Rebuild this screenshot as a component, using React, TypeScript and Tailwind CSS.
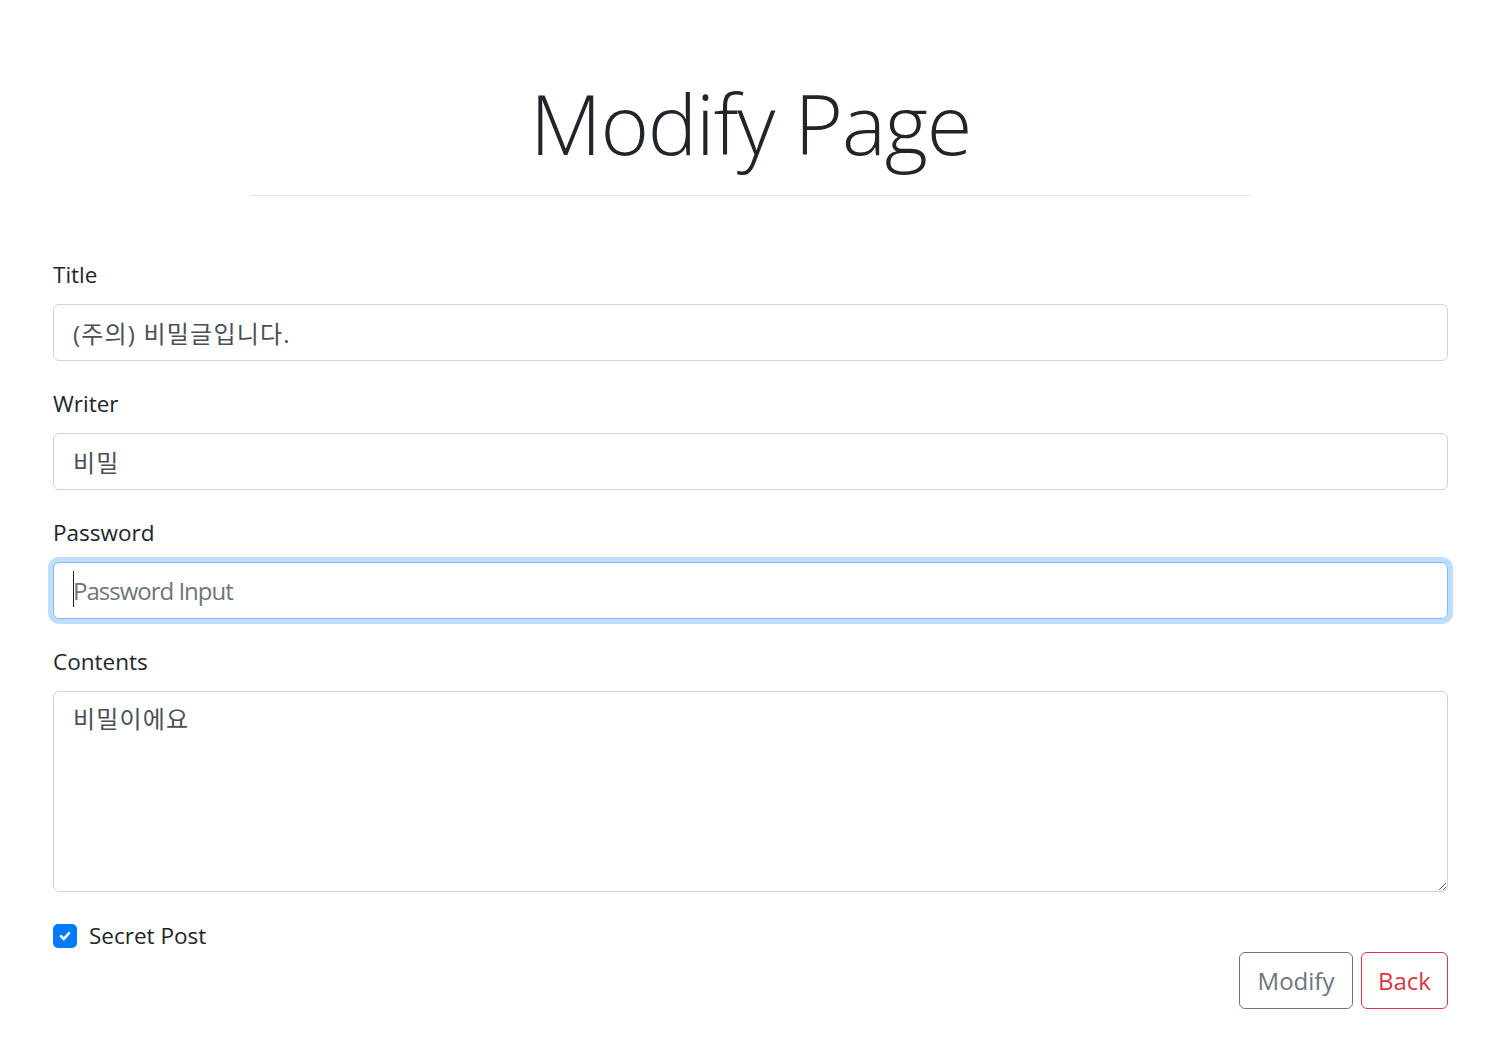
import React from "react";

const font = { fontFamily: '"Open Sans", "Noto Sans CJK KR", sans-serif' };

const Field = ({ label, children }: { label: string; children: React.ReactNode }) => (
  <div className="mb-[28px]">
    <label className="block h-[30px] text-[22.5px] leading-[30px] text-[#212529] mb-[14px]">{label}</label>
    {children}
  </div>
);

const inputCls =
  "block w-full h-[57px] border border-[#ced4da] rounded-[6px] px-[19px] text-[24px] tracking-[1.2px] text-[#495057] bg-white outline-none";

export default function App() {
  return (
    <div className="min-h-screen bg-white" style={font}>
      <div className="pt-[69px] flex flex-col items-center">
        <h1 className="text-[83px] font-light leading-[108px] tracking-[-1.2px] text-[#212529]">Modify Page</h1>
        <div className="w-[1001px] h-px bg-[#e5e5e5] mt-[18px]" />
      </div>

      <form className="flex flex-col px-[53px] mt-[64px]" onSubmit={(e) => e.preventDefault()}>
        <Field label="Title">
          <input className={inputCls} defaultValue="(주의) 비밀글입니다." style={font} />
        </Field>
        <Field label="Writer">
          <input className={inputCls} defaultValue="비밀" style={font} />
        </Field>
        <Field label="Password">
          <div className="relative">
            <input
              type="password"
              className="block w-full h-[57px] border border-[#80bdff] rounded-[6px] px-[19px] text-[24px] tracking-[-1px] text-[#495057] bg-white outline-none shadow-[0_0_0_5px_rgba(0,123,255,0.25)] placeholder:text-[#6c757d]"
              placeholder="Password Input"
              style={font}
            />
            <span className="absolute left-[20px] top-[9px] w-px h-[36px] bg-[#212529]" />
          </div>
        </Field>
        <Field label="Contents">
          <textarea
            className="block w-full h-[201px] border border-[#ced4da] rounded-[6px] px-[19px] py-[9px] text-[24px] leading-[36px] tracking-[1.2px] text-[#495057] bg-white outline-none"
            defaultValue="비밀이에요"
            style={font}
          />
        </Field>

        <div className="flex items-center h-[30px] mt-[1px]">
          <span className="w-[24px] h-[24px] rounded-[5px] bg-[#007bff] flex items-center justify-center">
            <svg width="14" height="14" viewBox="0 0 14 14">
              <path d="M3 7.2 L5.8 10 L11 4.2" fill="none" stroke="white" strokeWidth="2.6" strokeLinecap="round" strokeLinejoin="round" />
            </svg>
          </span>
          <span className="ml-[12px] text-[22.5px] text-[#212529]">Secret Post</span>
        </div>

        <div className="flex justify-end gap-[8px] mt-[1px]">
          <button type="button" className="w-[114px] h-[57px] border border-[#6c757d] rounded-[6px] text-[24px] text-[#6c757d] bg-white">
            Modify
          </button>
          <button type="button" className="w-[87px] h-[57px] border border-[#dc3545] rounded-[6px] text-[24px] text-[#dc3545] bg-white">
            Back
          </button>
        </div>
      </form>
    </div>
  );
}
